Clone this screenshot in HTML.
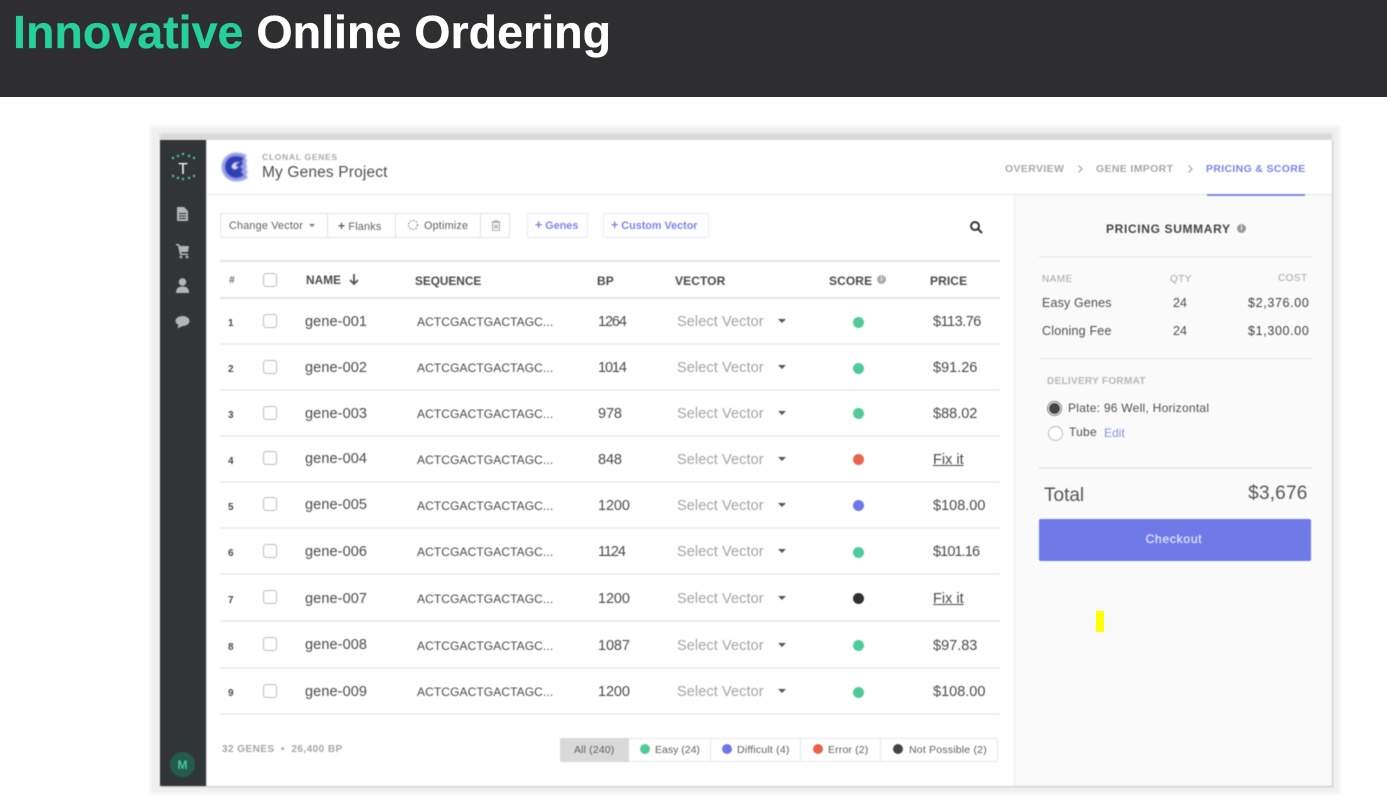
<!DOCTYPE html>
<html><head><meta charset="utf-8">
<style>
html,body{margin:0;padding:0;width:1387px;height:797px;overflow:hidden;background:#fff;font-family:"Liberation Sans",sans-serif}
.a{position:absolute;white-space:nowrap}
.t{position:absolute;white-space:nowrap;line-height:16px;margin-top:-8px}
#app{position:absolute;left:0;top:0;width:1387px;height:797px;filter:blur(.4px)}
.h{font-weight:bold;font-size:12px;color:#4a4a4a;letter-spacing:.1px}
.n{font-size:10px;font-weight:bold;color:#4a4a4a;margin-top:-6.500px}
.g{font-size:14.500px;color:#4a4a4a;letter-spacing:.1px;margin-top:-7px}
.s{font-size:12px;color:#4a4a4a;letter-spacing:.1px}
.b{font-size:14.500px;color:#4a4a4a;letter-spacing:-.1px}
.v{font-size:14.500px;color:#a4a4a4;letter-spacing:.1px}
.p{font-size:14.500px;color:#4a4a4a}
.u{text-decoration:underline}
.c{position:absolute;width:12px;height:12px;border:1px solid #bcbcbc;border-radius:3px;background:#fff;left:263px}
.d{position:absolute;width:11px;height:11px;border-radius:50%;left:853px}
.ar{position:absolute;left:778px;width:0;height:0;border-left:4px solid transparent;border-right:4px solid transparent;border-top:4px solid #555}
.l{position:absolute;left:220px;width:780px;height:2px;background:#eee;margin-top:-.7px}
.m{font-size:10.800px;color:#5e5e5e;letter-spacing:.2px}
.f{font-size:10.500px;color:#5e5e5e;letter-spacing:.15px}
.dt{position:absolute;width:10px;height:10px;border-radius:50%;top:744px}
</style></head><body>
<div class="a" style="left:0;top:0;width:1387px;height:97px;background:#2e2e30"></div>
<div class="a" style="left:13px;top:6px;font-size:46.600px;line-height:52px;font-weight:bold;color:#fff;-webkit-text-stroke:.3px currentColor"><span style="color:#25d198">Innovative</span> Online Ordering</div>

<div id="app">
<div class="a" style="left:150px;top:126px;width:1190px;height:668px;background:#f0f0f0;filter:blur(1.500px)"></div>
<div class="a" style="left:160px;top:133px;width:1172px;height:8px;background:#d9d9d9;filter:blur(1px)"></div>
<div class="a" style="left:160px;top:140px;width:1172px;height:646px;background:#fff;box-shadow:1px 1px 1px #c4c4c4"></div>
<div class="a" style="left:160px;top:140px;width:46px;height:646px;background:#313537"></div>
<div class="a" style="left:206px;top:140px;width:1px;height:646px;background:#ddd"></div>

<svg class="a" style="left:167px;top:150px" width="32" height="34" viewBox="0 0 32 34">
<g fill="#4ac9a4"><circle cx="6" cy="8" r="1.200"/><circle cx="11" cy="6" r="1.200"/><circle cx="16" cy="4" r="1.200"/><circle cx="22" cy="6" r="1.200"/><circle cx="27" cy="8" r="1.200"/><circle cx="6" cy="26" r="1.200"/><circle cx="11" cy="28" r="1.200"/><circle cx="16" cy="29" r="1.200"/><circle cx="22" cy="28" r="1.200"/><circle cx="27" cy="26" r="1.200"/></g>
<text x="16" y="24" text-anchor="middle" font-family="Liberation Sans" font-size="15.500" fill="#fff">T</text>
</svg>
<svg class="a" style="left:175px;top:206px" width="16" height="132" viewBox="0 0 16 132" fill="#b4b6b6">
<path d="M2 1h7l4 4v10H2zM4 7h7v1H4zM4 9.500h7v1H4zM4 12h7v1H4z" fill-rule="evenodd"/>
<path d="M1 38h3l1 2h9l-1 6H6l.5 1.500H13v1.500H5L3 39.500H1z"/><circle cx="6" cy="51" r="1.400"/><circle cx="12" cy="51" r="1.400"/>
<circle cx="7.500" cy="76" r="3.800"/><path d="M1 87c0-5 2.500-6.500 6.500-6.500S14 82 14 87z"/>
<path d="M7.500 110c4 0 7 2.200 7 5s-3 5-7 5l-5 2.500 1-3.500c-2-1-3-2.500-3-4 0-2.800 3-5 7-5z"/>
</svg>

<div class="a" style="left:170px;top:752px;width:25px;height:25px;border-radius:50%;background:#235c4b"></div>
<div class="t" style="left:170px;top:764.500px;width:25px;text-align:center;font-size:12px;font-weight:bold;color:#47c99a">M</div>

<svg class="a" style="left:220px;top:151px" width="32" height="32" viewBox="0 0 32 32">
<defs><filter id="bl"><feGaussianBlur stdDeviation=".8"/></filter></defs>
<g filter="url(#bl)"><path d="M16 1.500C8 1.500 1.500 8 1.500 16S8 30.500 16 30.500c5 0 9-1.500 12-4l-2-3 2-2-2-3 1-3-1-3 1-3-2-3 2-2c-3-2-7-3-12-3z" fill="#9ba2e6"/>
<path d="M15 5C9 5 5 10 5 16s5 11 11 11c3 0 6-1 8-3l-3-3 2-3-3-2 3-3-1-3 2-3c-2-1.500-5-2-9-2z" fill="#2f3cb8"/>
<path d="M12 15c1-3 4-4.500 8-3.500-2 .5-4.500 1.500-4.500 3 0 1 1.500 1.500 3 1-1 2-3 3-4.500 2.500-1.500-.5-2.300-1.500-2-3z" fill="#e4e6f8"/></g>
</svg>
<div class="t" style="left:262px;top:157px;font-size:8.500px;font-weight:bold;color:#aaa;letter-spacing:.7px">CLONAL GENES</div>
<div class="t" style="left:262px;top:173px;font-size:15.500px;color:#4f4f4f;letter-spacing:.15px">My Genes Project</div>

<div class="t" style="left:1005px;top:169px;font-size:10.500px;font-weight:bold;color:#a8a8a8;letter-spacing:.35px">OVERVIEW</div>
<svg class="a" style="left:1077px;top:164px" width="7" height="10" viewBox="0 0 7 10" fill="none" stroke="#999" stroke-width="1"><path d="M1.500 1.500L5 5 1.500 8.500"/></svg>
<div class="t" style="left:1096px;top:169px;font-size:10.500px;font-weight:bold;color:#a8a8a8;letter-spacing:.35px">GENE IMPORT</div>
<svg class="a" style="left:1187px;top:164px" width="7" height="10" viewBox="0 0 7 10" fill="none" stroke="#999" stroke-width="1"><path d="M1.500 1.500L5 5 1.500 8.500"/></svg>
<div class="t" style="left:1206px;top:169px;font-size:10.500px;font-weight:bold;color:#7c84e8;letter-spacing:.33px">PRICING &amp; SCORE</div>

<div class="a" style="left:207px;top:194px;width:1125px;height:1px;background:#e8e8e8"></div>
<div class="a" style="left:1014px;top:195px;width:318px;height:591px;background:#fafafa;border-left:1px solid #eee;box-sizing:border-box"></div>
<div class="a" style="left:1207px;top:194px;width:98px;height:2px;background:#7c84e8"></div>

<div class="a" style="left:220px;top:213px;width:288px;height:23px;border:1px solid #e3e3e3;border-radius:2px"></div>
<div class="a" style="left:327px;top:214px;width:1px;height:23px;background:#e3e3e3"></div>
<div class="a" style="left:395px;top:214px;width:1px;height:23px;background:#e3e3e3"></div>
<div class="a" style="left:480px;top:214px;width:1px;height:23px;background:#e3e3e3"></div>
<div class="t m" style="left:229px;top:226px">Change Vector</div>
<div class="a" style="left:309px;top:224px;width:0;height:0;border-left:3.500px solid transparent;border-right:3.500px solid transparent;border-top:3.500px solid #777"></div>
<div class="t m" style="left:338px;top:225.500px"><b style="font-size:12px">+</b>&nbsp;Flanks</div>
<svg class="a" style="left:407px;top:219px" width="12" height="12" viewBox="0 0 12 12"><circle cx="6" cy="6" r="4.500" fill="none" stroke="#888" stroke-width="1.200" stroke-dasharray="1.500 1.500"/></svg>
<div class="t m" style="left:424px;top:226px">Optimize</div>
<svg class="a" style="left:491px;top:220px" width="10" height="11" viewBox="0 0 10 11" fill="none" stroke="#999"><path d="M1.500 2.500h7v8h-7zM.5 2h9M3.500 2V.5h3V2M3.500 4.500v4M5 4.500v4M6.500 4.500v4" stroke-width=".8"/></svg>

<div class="a" style="left:527px;top:213px;width:59px;height:23px;border:1px solid #e9eaf8;border-radius:2px"></div>
<div class="t" style="left:535px;top:224.500px;font-size:10.800px;font-weight:bold;color:#7c84e8"><span style="font-size:12.500px">+</span>&nbsp;Genes</div>
<div class="a" style="left:603px;top:213px;width:104px;height:23px;border:1px solid #e9eaf8;border-radius:2px"></div>
<div class="t" style="left:611px;top:224.500px;font-size:10.800px;font-weight:bold;color:#7c84e8"><span style="font-size:12.500px">+</span>&nbsp;Custom Vector</div>
<svg class="a" style="left:969px;top:220px" width="14" height="14" viewBox="0 0 14 14" fill="none" stroke="#333" stroke-width="2"><circle cx="6" cy="6" r="4"/><path d="M9 9l4 4"/></svg>

<div class="l" style="top:261px;height:2px;background:#e6e6e6"></div>
<div class="l" style="top:298px;height:2px;background:#e6e6e6"></div>
<div class="t" style="left:229px;top:281px;font-size:10px;font-weight:bold;font-style:italic;color:#666">#</div>
<div class="c" style="top:273px"></div>
<div class="t h" style="left:306px;top:280px;font-size:11.800px">NAME</div>
<svg class="a" style="left:349px;top:274px" width="10" height="11" viewBox="0 0 10 11" fill="none" stroke="#555" stroke-width="1.800"><path d="M5 0v10M1 6l4 4 4-4"/></svg>
<div class="t h" style="left:415px;top:281px;font-size:11.800px;letter-spacing:0">SEQUENCE</div>
<div class="t h" style="left:597px;top:281px">BP</div>
<div class="t h" style="left:675px;top:281px">VECTOR</div>
<div class="t h" style="left:829px;top:281px">SCORE</div>
<div class="a" style="left:877px;top:275px;width:9px;height:9px;border-radius:50%;background:#aaa;color:#fff;font-size:7px;line-height:9px;text-align:center;font-weight:bold">i</div>
<div class="t h" style="left:930px;top:281px">PRICE</div>

<!-- row 1 -->
<div class="t n" style="left:228px;top:322px">1</div><div class="c" style="top:314px"></div><div class="t g" style="left:305px;top:320.500px">gene-001</div><div class="t s" style="left:417px;top:322px">ACTCGACTGACTAGC...</div><div class="t b" style="left:598px;top:322px;letter-spacing:-1.100px">1264</div><div class="t v" style="left:677px;top:322px">Select Vector</div><div class="ar" style="top:319px"></div><div class="d" style="top:317px;background:#4ecb98"></div><div class="t p" style="left:933px;top:322px;letter-spacing:-.5px">$113.76</div><div class="l" style="top:344px"></div>
<!-- row 2 -->
<div class="t n" style="left:228px;top:368px">2</div><div class="c" style="top:360px"></div><div class="t g" style="left:305px;top:366.500px">gene-002</div><div class="t s" style="left:417px;top:368px">ACTCGACTGACTAGC...</div><div class="t b" style="left:598px;top:368px;letter-spacing:-1.100px">1014</div><div class="t v" style="left:677px;top:368px">Select Vector</div><div class="ar" style="top:365px"></div><div class="d" style="top:363px;background:#4ecb98"></div><div class="t p" style="left:933px;top:368px">$91.26</div><div class="l" style="top:390px"></div>
<!-- row 3 -->
<div class="t n" style="left:228px;top:414px">3</div><div class="c" style="top:406px"></div><div class="t g" style="left:305px;top:412.500px">gene-003</div><div class="t s" style="left:417px;top:414px">ACTCGACTGACTAGC...</div><div class="t b" style="left:598px;top:414px">978</div><div class="t v" style="left:677px;top:414px">Select Vector</div><div class="ar" style="top:411px"></div><div class="d" style="top:408px;background:#4ecb98"></div><div class="t p" style="left:933px;top:414px">$88.02</div><div class="l" style="top:436px"></div>
<!-- row 4 -->
<div class="t n" style="left:228px;top:460px">4</div><div class="c" style="top:451px"></div><div class="t g" style="left:305px;top:458px">gene-004</div><div class="t s" style="left:417px;top:460px">ACTCGACTGACTAGC...</div><div class="t b" style="left:598px;top:460px">848</div><div class="t v" style="left:677px;top:460px">Select Vector</div><div class="ar" style="top:457px"></div><div class="d" style="top:454px;background:#e9634c"></div><div class="t p u" style="left:933px;top:460px">Fix it</div><div class="l" style="top:482px"></div>
<!-- row 5 -->
<div class="t n" style="left:228px;top:506px">5</div><div class="c" style="top:497px"></div><div class="t g" style="left:305px;top:504px">gene-005</div><div class="t s" style="left:417px;top:506px">ACTCGACTGACTAGC...</div><div class="t b" style="left:598px;top:506px">1200</div><div class="t v" style="left:677px;top:506px">Select Vector</div><div class="ar" style="top:503px"></div><div class="d" style="top:500px;background:#6c78e8"></div><div class="t p" style="left:933px;top:506px">$108.00</div><div class="l" style="top:528px"></div>
<!-- row 6 -->
<div class="t n" style="left:228px;top:552px">6</div><div class="c" style="top:544px"></div><div class="t g" style="left:305px;top:550.500px">gene-006</div><div class="t s" style="left:417px;top:552px">ACTCGACTGACTAGC...</div><div class="t b" style="left:598px;top:552px;letter-spacing:-1.100px">1124</div><div class="t v" style="left:677px;top:552px">Select Vector</div><div class="ar" style="top:549px"></div><div class="d" style="top:547px;background:#4ecb98"></div><div class="t p" style="left:933px;top:552px;letter-spacing:-.9px">$101.16</div><div class="l" style="top:574px"></div>
<!-- row 7 -->
<div class="t n" style="left:228px;top:599px">7</div><div class="c" style="top:590px"></div><div class="t g" style="left:305px;top:597.500px">gene-007</div><div class="t s" style="left:417px;top:599px">ACTCGACTGACTAGC...</div><div class="t b" style="left:598px;top:599px">1200</div><div class="t v" style="left:677px;top:599px">Select Vector</div><div class="ar" style="top:596px"></div><div class="d" style="top:593px;background:#2f2f2f"></div><div class="t p u" style="left:933px;top:599px">Fix it</div><div class="l" style="top:621px"></div>
<!-- row 8 -->
<div class="t n" style="left:228px;top:646px">8</div><div class="c" style="top:637px"></div><div class="t g" style="left:305px;top:644px">gene-008</div><div class="t s" style="left:417px;top:646px">ACTCGACTGACTAGC...</div><div class="t b" style="left:598px;top:646px">1087</div><div class="t v" style="left:677px;top:646px">Select Vector</div><div class="ar" style="top:643px"></div><div class="d" style="top:640px;background:#4ecb98"></div><div class="t p" style="left:933px;top:646px">$97.83</div><div class="l" style="top:667.500px"></div>
<!-- row 9 -->
<div class="t n" style="left:228px;top:692px">9</div><div class="c" style="top:684px"></div><div class="t g" style="left:305px;top:690.500px">gene-009</div><div class="t s" style="left:417px;top:692px">ACTCGACTGACTAGC...</div><div class="t b" style="left:598px;top:692px">1200</div><div class="t v" style="left:677px;top:692px">Select Vector</div><div class="ar" style="top:689px"></div><div class="d" style="top:687px;background:#4ecb98"></div><div class="t p" style="left:933px;top:692px">$108.00</div><div class="l" style="top:714px"></div>

<div class="t" style="left:222px;top:750px;font-size:10px;font-weight:bold;color:#a6a6a6;letter-spacing:.45px">32 GENES &nbsp;&bull;&nbsp; 26,400 BP</div>

<div class="a" style="left:560px;top:738px;width:436px;height:22px;border:1px solid #e8e8e8;border-radius:2px;background:#fff"></div>
<div class="a" style="left:560px;top:738px;width:69px;height:24px;background:#d9d9d9;border-radius:2px 0 0 2px"></div>
<div class="a" style="left:710px;top:738px;width:1px;height:23px;background:#e8e8e8"></div>
<div class="a" style="left:800px;top:738px;width:1px;height:23px;background:#e8e8e8"></div>
<div class="a" style="left:880px;top:738px;width:1px;height:23px;background:#e8e8e8"></div>
<div class="t f" style="left:574px;top:750px">All (240)</div>
<div class="dt" style="left:640px;background:#4ecb98"></div><div class="t f" style="left:655px;top:750px;letter-spacing:0">Easy (24)</div>
<div class="dt" style="left:722px;background:#6c78e8"></div><div class="t f" style="left:737px;top:750px;letter-spacing:.2px">Difficult (4)</div>
<div class="dt" style="left:813px;background:#e9634c"></div><div class="t f" style="left:828px;top:750px">Error (2)</div>
<div class="dt" style="left:893px;background:#444"></div><div class="t f" style="left:909px;top:750px;letter-spacing:.2px">Not Possible (2)</div>

<div class="t" style="left:1106px;top:228.500px;font-size:12px;font-weight:bold;color:#444;letter-spacing:.65px">PRICING SUMMARY</div>
<div class="a" style="left:1237px;top:224px;width:9px;height:9px;border-radius:50%;background:#999;color:#fff;font-size:7px;line-height:9px;text-align:center;font-weight:bold">i</div>
<div class="a" style="left:1039px;top:256px;width:273px;height:2px;background:#eee"></div>
<div class="t" style="left:1042px;top:280px;font-size:10px;color:#a6a6a6;letter-spacing:.45px">NAME</div>
<div class="t" style="left:1170px;top:280px;font-size:10px;color:#a6a6a6;letter-spacing:.45px">QTY</div>
<div class="t" style="left:1278px;top:279px;font-size:10px;color:#a6a6a6;letter-spacing:.45px">COST</div>
<div class="t" style="left:1042px;top:303px;font-size:12.500px;color:#4f4f4f;letter-spacing:.15px">Easy Genes</div>
<div class="t" style="left:1173px;top:303px;font-size:12.500px;color:#4f4f4f">24</div>
<div class="t" style="right:77.500px;top:303px;font-size:12.500px;color:#3f3f3f;letter-spacing:.65px">$2,376.00</div>
<div class="t" style="left:1042px;top:331px;font-size:12.500px;color:#4f4f4f;letter-spacing:.2px">Cloning Fee</div>
<div class="t" style="left:1173px;top:331px;font-size:12.500px;color:#4f4f4f">24</div>
<div class="t" style="right:77.500px;top:331px;font-size:12.500px;color:#3f3f3f;letter-spacing:.65px">$1,300.00</div>
<div class="a" style="left:1039px;top:358px;width:273px;height:1px;background:#e6e6e6"></div>
<div class="t" style="left:1047px;top:381.500px;font-size:10px;font-weight:bold;color:#b8b8b8;letter-spacing:.3px">DELIVERY FORMAT</div>
<div class="a" style="left:1047px;top:401px;width:13px;height:13px;border:1px solid #777;border-radius:50%;background:#fff"></div>
<div class="a" style="left:1049px;top:403px;width:11px;height:11px;border-radius:50%;background:#444"></div>
<div class="t" style="left:1068px;top:408px;font-size:12px;color:#4f4f4f;letter-spacing:.26px">Plate: 96 Well, Horizontal</div>
<div class="a" style="left:1048px;top:426px;width:13px;height:13px;border:1px solid #bbb;border-radius:50%;background:#fff"></div>
<div class="t" style="left:1069px;top:432px;font-size:12px;color:#4f4f4f;letter-spacing:.25px">Tube</div>
<div class="t" style="left:1104px;top:433px;font-size:12px;color:#8a91e6">Edit</div>
<div class="a" style="left:1039px;top:467px;width:273px;height:2px;background:#eaeaea"></div>
<div class="t" style="left:1044px;top:496px;font-size:19px;color:#555;line-height:20px;margin-top:-10px">Total</div>
<div class="t" style="right:79.500px;top:494px;font-size:19px;color:#555;line-height:20px;margin-top:-10px;letter-spacing:.2px">$3,676</div>
<div class="a" style="left:1039px;top:519px;width:272px;height:42px;background:#6f7ae8;border-radius:2px"></div>
<div class="t" style="left:1038px;top:539px;width:272px;text-align:center;font-size:12px;color:#e4e6fb;letter-spacing:.75px;-webkit-text-stroke:.25px #e4e6fb">Checkout</div>
</div>
<div class="a" style="left:1096px;top:611px;width:8px;height:21px;background:#ffff00"></div>
</body></html>
